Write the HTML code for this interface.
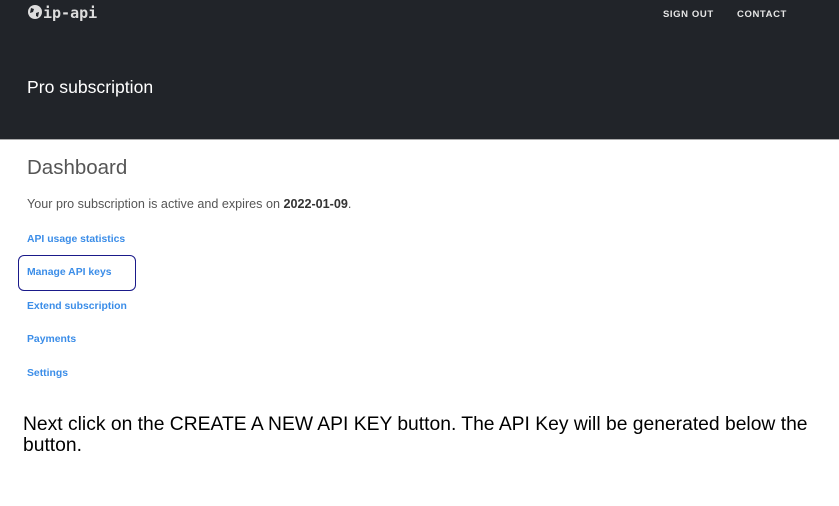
<!DOCTYPE html>
<html><head><style>
body{margin:0;width:839px;height:506px;background:#fff;font-family:"Liberation Sans",sans-serif;position:relative;overflow:hidden}
.hdr{position:absolute;left:0;top:0;width:839px;height:139px;background:#212429;border-bottom:1px solid #aaa}
.logo{position:absolute;left:27px;top:4px;color:#ddd;font-family:"DejaVu Sans Mono","Liberation Mono",monospace;font-size:15px;font-weight:bold}
.nav{position:absolute;top:9px;color:#e6e6e6;font-size:9.5px;letter-spacing:0.6px;font-weight:bold}
.title{position:absolute;left:27px;top:77px;color:#fff;font-size:17.6px}
.dash{position:absolute;left:27px;top:156px;color:#555;font-size:20.5px}
.p{position:absolute;left:27px;top:197px;color:#555;font-size:12.6px}
.l{position:absolute;left:27px;color:#3b8de8;font-size:10.4px;font-weight:bold}
.box{position:absolute;left:18px;top:255px;width:116px;height:34px;border:1px solid #1a1a8a;border-radius:6px}
.note{position:absolute;left:23px;top:414px;font-size:19.3px;color:#000;line-height:21px;width:800px}
</style></head><body>
<div class="hdr">
<div class="logo"><svg width="16" height="16" viewBox="0 0 16 16" style="vertical-align:-2px"><circle cx="8" cy="8" r="7" fill="#ddd"/><path d="M4 4 L7 5 L6 8 L3 9 Z M9 9 L12 8 L11 13 L9 12Z" fill="#212429"/></svg>ip-api</div>
<div class="nav" style="left:663px">SIGN OUT</div>
<div class="nav" style="left:737px">CONTACT</div>
<div class="title">Pro subscription</div>
</div>
<div class="dash">Dashboard</div>
<div class="p">Your pro subscription is active and expires on <b style="color:#333">2022-01-09</b>.</div>
<div class="l" style="top:234px">API usage statistics</div>
<div class="box"></div>
<div class="l" style="top:267px">Manage API keys</div>
<div class="l" style="top:301px">Extend subscription</div>
<div class="l" style="top:334px">Payments</div>
<div class="l" style="top:368px">Settings</div>
<div class="note">Next click on the CREATE A NEW API KEY button. The API Key will be generated below the button.</div>
</body></html>
